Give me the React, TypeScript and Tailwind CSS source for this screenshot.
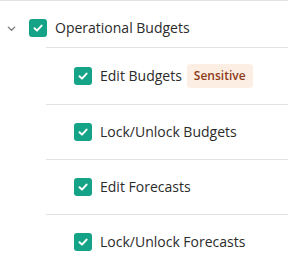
import React from "react";

interface PermissionRowProps {
  label: string;
  badge?: string;
  last?: boolean;
}

const Checkbox: React.FC = () => (
  <span className="flex h-[18px] w-[18px] shrink-0 items-center justify-center rounded-[3px] bg-[#14a386]">
    <svg width="12" height="12" viewBox="0 0 12 12" fill="none">
      <path
        d="M2.5 6.2 5 8.6 9.6 3.6"
        stroke="white"
        strokeWidth="2"
        strokeLinecap="round"
        strokeLinejoin="round"
      />
    </svg>
  </span>
);

const PermissionRow: React.FC<PermissionRowProps> = ({ label, badge, last }) => (
  <div
    className={`flex items-center gap-2 py-4 pl-7 ${
      last ? "" : "border-b border-[#e2e2e2]"
    }`}
  >
    <Checkbox />
    <span className="text-[14px] leading-[22px] text-[#2b2b2b]">{label}</span>
    {badge && (
      <span className="-ml-[3px] flex h-6 items-center rounded-[4px] bg-[#fdeee3] px-[7px] text-[12px] font-semibold text-[#8c3b17]">
        {badge}
      </span>
    )}
  </div>
);

const permissions: PermissionRowProps[] = [
  { label: "Edit Budgets", badge: "Sensitive" },
  { label: "Lock/Unlock Budgets" },
  { label: "Edit Forecasts" },
  { label: "Lock/Unlock Forecasts", last: true },
];

export default function App() {
  return (
    <div
      className="h-[277px] w-[288px] overflow-hidden bg-white"
      style={{ fontFamily: '"Open Sans", sans-serif' }}
    >
      <div className="border-t border-[#e2e2e2]">
        <div className="flex items-center pb-[10px] pl-[6px] pt-[18px]">
          <svg width="11" height="11" viewBox="0 0 12 12" fill="none" className="mr-[12px]">
            <path
              d="M2.5 4.5 6 8 9.5 4.5"
              stroke="#7a7a7a"
              strokeWidth="1.5"
              strokeLinecap="round"
              strokeLinejoin="round"
            />
          </svg>
          <Checkbox />
          <span className="ml-2 text-[14px] leading-[18px] text-[#2b2b2b]">
            Operational Budgets
          </span>
        </div>
        <div className="ml-[46px] border-t border-[#e2e2e2]">
          {permissions.map((p) => (
            <PermissionRow key={p.label} {...p} />
          ))}
        </div>
      </div>
    </div>
  );
}
